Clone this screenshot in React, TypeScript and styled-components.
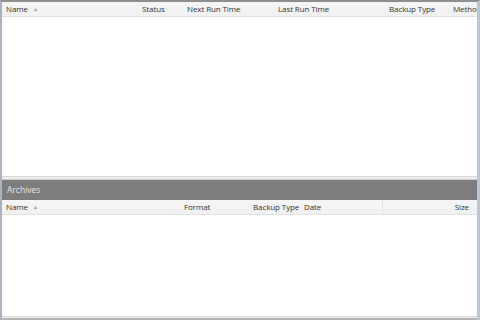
import React from "react";
import styled, { createGlobalStyle } from "styled-components";

const Global = createGlobalStyle`
  html, body { margin: 0; padding: 0; background: #fff; }
  body { width: 480px; height: 320px; overflow: hidden; font-family: "Open Sans", "Noto Sans", sans-serif; }
`;

const Frame = styled.div`
  width: 480px;
  height: 320px;
  box-sizing: border-box;
  display: flex;
  flex-direction: column;
  border-top: 2px solid #8e8e8e;
  border-left: 2px solid #a9b4c0;
  border-right: 3px solid #b9c6d4;
  background: #fff;
  overflow: hidden;
`;

const Pane = styled.div<{ $height?: number }>`
  display: flex;
  flex-direction: column;
  ${(p) => (p.$height ? `height: ${p.$height}px; flex: none;` : "flex: 1;")}
  overflow: hidden;
`;

const HeaderRow = styled.div`
  display: flex;
  height: 14px;
  flex: none;
  align-items: center;
  background: linear-gradient(#f5f5f5, #f1f1f1);
  border-bottom: 1px solid #e2e2e2;
  white-space: nowrap;
  overflow: hidden;
`;

const HeaderCell = styled.div<{ $w: number; $right?: boolean; $sep?: boolean }>`
  width: ${(p) => p.$w}px;
  flex: none;
  box-sizing: border-box;
  padding: 0 ${(p) => (p.$right ? 8 : 4)}px 0 4px;
  font-size: 8px;
  letter-spacing: -0.1px;
  color: #333;
  text-align: ${(p) => (p.$right ? "right" : "left")};
  border-right: ${(p) => (p.$sep ? "1px solid #e4e4e4" : "none")};
  height: 100%;
  line-height: 14px;
  overflow: hidden;
`;

const Caret = styled.span`
  display: inline-block;
  margin-left: 5px;
  font-size: 5px;
  color: #9a9a9a;
  vertical-align: 1px;
`;

const Body = styled.div`
  flex: 1;
  background: #fff;
`;

const Divider = styled.div`
  height: 4px;
  flex: none;
  border-top: 1px solid #d9d9d9;
  border-bottom: 1px solid #cfcfcf;
  background: #ececec;
  box-sizing: border-box;
`;

const SectionBar = styled.div`
  height: 20px;
  flex: none;
  background: #7d7d7d;
  color: #e6e6e6;
  font-size: 8.5px;
  line-height: 20px;
  padding-left: 5px;
`;

const BottomEdge = styled.div`
  height: 4px;
  flex: none;
  border-top: 1px solid #d8d8d8;
  border-bottom: 2px solid #b3b3b3;
  background: #f3f3f3;
  box-sizing: border-box;
`;

type Col = { label: string; w: number; sort?: boolean; right?: boolean; sep?: boolean };

const jobCols: Col[] = [
  { label: "Name", w: 136, sort: true },
  { label: "Status", w: 45 },
  { label: "Next Run Time", w: 91 },
  { label: "Last Run Time", w: 111 },
  { label: "Backup Type", w: 64 },
  { label: "Method", w: 60 },
];

const archiveCols: Col[] = [
  { label: "Name", w: 178, sort: true },
  { label: "Format", w: 69 },
  { label: "Backup Type", w: 51 },
  { label: "Date", w: 83, sep: true },
  { label: "Size", w: 94, right: true },
];

const Header = ({ cols }: { cols: Col[] }) => (
  <HeaderRow>
    {cols.map((c) => (
      <HeaderCell key={c.label} $w={c.w} $right={c.right} $sep={c.sep}>
        {c.label}
        {c.sort && <Caret>▲</Caret>}
      </HeaderCell>
    ))}
  </HeaderRow>
);

export default function App() {
  return (
    <>
      <Global />
      <Frame>
        <Pane $height={174}>
          <Header cols={jobCols} />
          <Body />
        </Pane>
        <Divider />
        <SectionBar>Archives</SectionBar>
        <Pane>
          <Header cols={archiveCols} />
          <Body />
        </Pane>
        <BottomEdge />
      </Frame>
    </>
  );
}
